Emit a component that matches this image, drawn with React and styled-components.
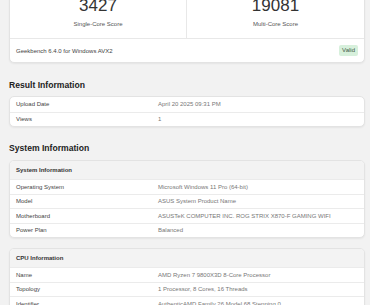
import React from 'react';
import styled, { createGlobalStyle } from 'styled-components';

const GlobalStyle = createGlobalStyle`
  html, body {
    margin: 0;
    background: #f2f2f2;
    font-family: "Liberation Sans", Arial, sans-serif;
    overflow: hidden;
  }
`

const Page = styled.div`
  padding: 0 5px 0 9px;
`

const Card = styled.div`
  background: #fff;
  border: 1px solid #e3e3e3;
  border-radius: 5px;
  box-shadow: 0 1px 2px rgba(0, 0, 0, 0.06);
  overflow: hidden;
  margin-top: ${p => p.$gap || 0}px;
`

const Summary = styled(Card)`
  margin-top: -31px;
`

const Scores = styled.div`
  display: grid;
  grid-template-columns: 1fr 1fr;
  border-bottom: 1px solid #e8e8e8;
`

const ScoreCell = styled.div`
  padding: 26px 0 10px;
  text-align: center;
  border-right: ${p => (p.$first ? '1px solid #e8e8e8' : 'none')};
`

const ScoreValue = styled.div`
  font-size: 17px;
  line-height: 20px;
  color: #333;
`

const ScoreLabel = styled.div`
  margin-top: 4px;
  font-size: 6px;
  line-height: 8px;
  color: #555;
`

const Footer = styled.div`
  height: 23px;
  padding: 0 6px;
  display: flex;
  align-items: center;
  justify-content: space-between;
  font-size: 6px;
  color: #444;
`

const Badge = styled.span`
  background: #d7f0dc;
  color: #3c5a43;
  border-radius: 2px;
  padding: 2px 3px;
  font-size: 6px;
  line-height: 7px;
`

const SectionTitle = styled.div`
  margin: ${p => p.$top}px 0 ${p => p.$bottom}px;
  font-size: 8.6px;
  line-height: 12px;
  font-weight: bold;
  color: #222;
`

const Header = styled.div`
  height: 18px;
  padding: 0 6px;
  display: flex;
  align-items: center;
  background: #f3f3f3;
  font-size: 6px;
  font-weight: bold;
  color: #333;
`

const Row = styled.div`
  height: 14.5px;
  box-sizing: border-box;
  padding: 0 6px;
  display: grid;
  grid-template-columns: 142px 1fr;
  align-items: center;
  font-size: 6px;
  border-top: ${p => (p.$first ? 'none' : '1px solid #ebebeb')};
`

const Label = styled.span`
  color: #444;
`

const Value = styled.span`
  color: #777;
  white-space: nowrap;
`

const InfoTable = ({ title, rows, gap }) => (
  <Card $gap={gap}>
    {title && <Header>{title}</Header>}
    {rows.map(([k, v], i) => (
      <Row key={k} $first={!title && i === 0}>
        <Label>{k}</Label>
        <Value>{v}</Value>
      </Row>
    ))}
  </Card>
)

export default function App() {
  return (
    <Page>
      <GlobalStyle />
      <Summary>
        <Scores>
          <ScoreCell $first>
            <ScoreValue>3427</ScoreValue>
            <ScoreLabel>Single-Core Score</ScoreLabel>
          </ScoreCell>
          <ScoreCell>
            <ScoreValue>19081</ScoreValue>
            <ScoreLabel>Multi-Core Score</ScoreLabel>
          </ScoreCell>
        </Scores>
        <Footer>
          <span>Geekbench 6.4.0 for Windows AVX2</span>
          <Badge>Valid</Badge>
        </Footer>
      </Summary>

      <SectionTitle $top={16} $bottom={5}>Result Information</SectionTitle>
      <InfoTable
        rows={[
          ['Upload Date', 'April 20 2025 09:31 PM'],
          ['Views', '1'],
        ]}
      />

      <SectionTitle $top={15} $bottom={6}>System Information</SectionTitle>
      <InfoTable
        title="System Information"
        rows={[
          ['Operating System', 'Microsoft Windows 11 Pro (64-bit)'],
          ['Model', 'ASUS System Product Name'],
          ['Motherboard', 'ASUSTeK COMPUTER INC. ROG STRIX X870-F GAMING WIFI'],
          ['Power Plan', 'Balanced'],
        ]}
      />
      <InfoTable
        gap={10}
        title="CPU Information"
        rows={[
          ['Name', 'AMD Ryzen 7 9800X3D 8-Core Processor'],
          ['Topology', '1 Processor, 8 Cores, 16 Threads'],
          ['Identifier', 'AuthenticAMD Family 26 Model 68 Stepping 0'],
          ['Base Frequency', '4.70 GHz'],
        ]}
      />
    </Page>
  )
}
